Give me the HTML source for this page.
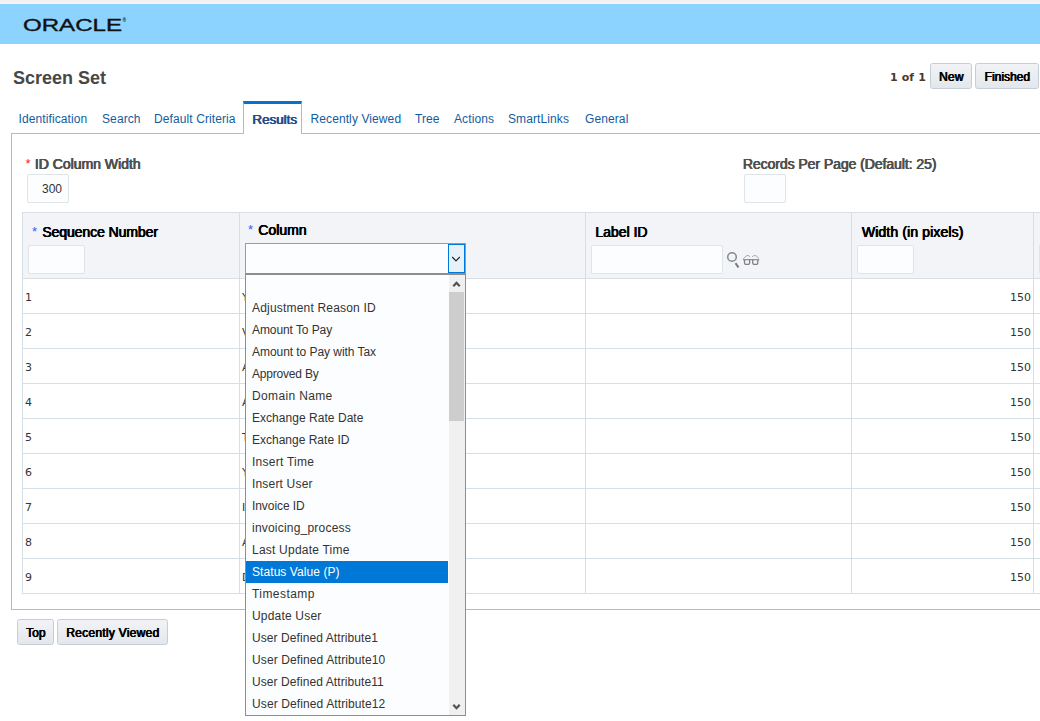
<!DOCTYPE html>
<html lang="en">
<head>
<meta charset="utf-8">
<title>Screen Set</title>
<style>
html,body{margin:0;padding:0;}
body{width:1040px;height:721px;overflow:hidden;background:#fff;position:relative;
  font-family:"Liberation Sans",sans-serif;font-size:12px;color:#333;}
.abs{position:absolute;white-space:nowrap;}
#topstrip{left:0;top:0;width:1040px;height:4px;background:linear-gradient(#f1f1f1 0,#f1f1f1 50%,#f8f8f8 50%,#f6f3f1 100%);}
#hdr{left:0;top:4px;width:1040px;height:40px;background:#8cd3ff;}
#logo{left:20px;top:14px;width:112px;height:22px;}
#title{left:13px;top:66px;font-size:18px;font-weight:bold;line-height:24px;color:#474747;}
#count{left:890px;top:70px;font-family:"DejaVu Sans",sans-serif;font-size:11px;font-weight:bold;line-height:16px;color:#4a3a2e;letter-spacing:0.1px;}
.btn{position:absolute;box-sizing:border-box;height:26px;border:1px solid #c4ced7;border-radius:2.5px;
  background:linear-gradient(#f1f3f6,#e3e7ec);font-weight:normal;font-size:12px;line-height:26px;color:#000;text-shadow:0.4px 0 0 #000,0.75px 0 0 #000;
  text-align:center;white-space:nowrap;}
.tab{position:absolute;top:111px;line-height:16px;font-size:12px;color:#145c9e;white-space:nowrap;letter-spacing:0.1px;}
#panel{left:11px;top:133px;width:1040px;height:475px;border:1px solid #a5bdd9;box-sizing:content-box;}
#acttab{left:243px;top:101px;width:57px;height:30px;border:1px solid #a5bdd9;border-top:3px solid #0572ce;border-bottom:none;background:#fff;}
#acttab span{position:absolute;left:8px;top:7.6px;font-size:13.4px;font-weight:normal;line-height:16px;color:#1d4f91;text-shadow:0.45px 0 0 #1d4f91,0.85px 0 0 #1d4f91;}
.lbl{font-size:14px;font-weight:normal;line-height:16px;color:#4f4f4f;text-shadow:0.4px 0 0 #4f4f4f,0.8px 0 0 #4f4f4f;}
.req{font-family:"Liberation Sans",sans-serif;color:#f21d1d;font-weight:normal;font-size:13px;letter-spacing:0;position:relative;top:-1px;margin-right:0px;text-shadow:none;}
.inp{position:absolute;box-sizing:border-box;height:29px;border:1px solid #dfe4e7;border-radius:2px;background:#fcfdfe;}
#tbl{left:22px;top:212px;width:1030px;height:381px;border-top:1px solid #d6dfe6;border-left:1px solid #d6dfe6;}
#thead{left:23px;top:213px;width:1017px;height:65px;background:#f2f4f8;}
.hline{position:absolute;left:22px;width:1018px;height:1px;background:#d6dfe6;}
.vline{position:absolute;top:212px;width:1px;height:382px;background:#d6dfe6;}
.th{font-weight:normal;font-size:14px;line-height:16px;color:#000;text-shadow:0.4px 0 0 #000,0.8px 0 0 #000;}
.star{font-family:"Liberation Sans",sans-serif;color:#2962ff;font-weight:normal;font-size:13px;letter-spacing:0;position:relative;top:-1px;margin-right:1px;text-shadow:none;}
.num{font-family:"DejaVu Sans",sans-serif;font-size:11px;line-height:14px;color:#333;}
#dd{left:245px;top:274px;width:221px;height:442px;box-sizing:border-box;border:1px solid #8e8e8e;background:#fcfdfe;}
.opt{position:absolute;left:0;width:202px;height:22px;line-height:22px;font-size:12px;color:#333;padding-left:6px;box-sizing:border-box;white-space:nowrap;}
.opt.sel{background:#0078d7;color:#fff;}
#sbar{position:absolute;left:203px;top:0;width:16px;height:440px;background:#f0f0f0;}
#thumb{position:absolute;left:0;top:17px;width:15px;height:129px;background:#cdcdcd;}
#sel{left:245px;top:243px;width:221px;height:31px;box-sizing:border-box;border:1px solid #9b9b9b;border-bottom-color:#8e8e8e;background:#fcfdfe;}
#selbtn{position:absolute;left:202px;top:0;width:17px;height:29px;box-sizing:border-box;border:1px solid #0078d7;background:#e5f1fb;}
</style>
</head>
<body>
<div class="abs" id="topstrip"></div>
<div class="abs" id="hdr"></div>
<svg class="abs" id="logo" viewBox="0 0 112 22">
  <text x="3" y="16.7" font-family="Liberation Sans, sans-serif" font-size="16" fill="#111" stroke="#111" stroke-width="0.35" textLength="99" lengthAdjust="spacingAndGlyphs">ORACLE</text>
  <text x="102.6" y="8.3" font-family="Liberation Sans, sans-serif" font-size="5" font-weight="bold" fill="#1a1a1a">®</text>
</svg>

<div class="abs" id="title">Screen Set</div>
<div class="abs" id="count">1 of 1</div>
<div class="btn" style="left:930px;top:63px;width:42px;letter-spacing:0.2px;">New</div>
<div class="btn" style="left:975px;top:63px;width:64px;">Finished</div>

<div class="tab" style="left:18.5px;">Identification</div>
<div class="tab" style="left:102px;">Search</div>
<div class="tab" style="left:154px;">Default Criteria</div>
<div class="tab" style="left:310.5px;">Recently Viewed</div>
<div class="tab" style="left:415px;">Tree</div>
<div class="tab" style="left:454px;">Actions</div>
<div class="tab" style="left:508px;">SmartLinks</div>
<div class="tab" style="left:585px;">General</div>

<div class="abs" id="panel"></div>
<div class="abs" id="acttab"><span>Results</span></div>

<div class="abs lbl" style="left:25.5px;top:156px;"><span class="req">*</span> ID Column Width</div>
<div class="inp" style="left:27px;top:174px;width:42px;text-align:right;padding-right:6px;line-height:28px;font-size:12px;color:#333;">300</div>
<div class="abs lbl" style="left:742.5px;top:156px;letter-spacing:-0.06px;">Records Per Page (Default: 25)</div>
<div class="inp" style="left:744px;top:174px;width:42px;"></div>

<div class="abs" id="tbl"></div>
<div class="abs" id="thead"></div>
<div class="hline" style="top:278px;"></div>
<div class="hline" style="top:313px;"></div>
<div class="hline" style="top:348px;"></div>
<div class="hline" style="top:383px;"></div>
<div class="hline" style="top:418px;"></div>
<div class="hline" style="top:453px;"></div>
<div class="hline" style="top:488px;"></div>
<div class="hline" style="top:523px;"></div>
<div class="hline" style="top:558px;"></div>
<div class="hline" style="top:593px;"></div>
<div class="vline" style="left:239px;"></div>
<div class="vline" style="left:585px;"></div>
<div class="vline" style="left:851px;"></div>
<div class="vline" style="left:1033px;"></div>

<div class="abs th" style="left:32px;top:223.5px;letter-spacing:-0.07px;"><span class="star">*</span> Sequence Number</div>
<div class="inp" style="left:28px;top:245px;width:57px;"></div>
<div class="abs th" style="left:248px;top:221.5px;"><span class="star">*</span> Column</div>
<div class="abs th" style="left:595px;top:223.5px;">Label ID</div>
<div class="inp" style="left:591px;top:245px;width:132px;"></div>
<div class="abs th" style="left:861.5px;top:223.5px;letter-spacing:0.12px;">Width (in pixels)</div>
<div class="inp" style="left:857px;top:245px;width:57px;"></div>
<div class="inp" style="left:1039px;top:244px;width:57px;height:30px;"></div>

<svg class="abs" style="left:725px;top:250px;width:36px;height:20px;" viewBox="0 0 36 20">
  <circle cx="7" cy="7" r="4.3" fill="none" stroke="#84888c" stroke-width="1.5"/>
  <path d="M10.5 13.1 L13.5 17.5" stroke="#777b7f" stroke-width="2" fill="none"/>
  <g fill="none" stroke="#7d8185" stroke-width="1.3">
    <path d="M18 9.7 H34.2" stroke-width="1.1"/>
    <path d="M19.5 9.7 v3.1 a1.6 1.6 0 0 0 1.6 1.6 h1.9 a1.6 1.6 0 0 0 1.6 -1.6 v-3.1"/>
    <path d="M27.7 9.7 v3.1 a1.6 1.6 0 0 0 1.6 1.6 h1.9 a1.6 1.6 0 0 0 1.6 -1.6 v-3.1"/>
    <path d="M18.3 8.7 Q21.5 5.1 23 5.4 Q24.2 5.7 25 6.9" stroke="#9a9ea2" stroke-width="0.9"/>
    <path d="M27.2 6.9 Q28 5.7 29.3 5.4 Q31 5.1 34 8.5" stroke="#9a9ea2" stroke-width="0.9"/>
  </g>
</svg>

<!-- rows -->
<div class="abs num" style="left:25px;top:291px;">1</div>
<div class="abs num" style="left:25px;top:326px;">2</div>
<div class="abs num" style="left:25px;top:361px;">3</div>
<div class="abs num" style="left:25px;top:396px;">4</div>
<div class="abs num" style="left:25px;top:431px;">5</div>
<div class="abs num" style="left:25px;top:466px;">6</div>
<div class="abs num" style="left:25px;top:501px;">7</div>
<div class="abs num" style="left:25px;top:536px;">8</div>
<div class="abs num" style="left:25px;top:571px;">9</div>

<div class="abs num" style="left:242px;top:291px;">Year</div>
<div class="abs num" style="left:242px;top:326px;">Vendor</div>
<div class="abs num" style="left:242px;top:361px;">Amount To Pay</div>
<div class="abs num" style="left:242px;top:396px;">Approved By</div>
<div class="abs num" style="left:242px;top:431px;">Timestamp</div>
<div class="abs num" style="left:242px;top:466px;">Year To Date</div>
<div class="abs num" style="left:242px;top:501px;">Invoice ID</div>
<div class="abs num" style="left:242px;top:536px;">Adjustment</div>
<div class="abs num" style="left:242px;top:571px;">Domain Name</div>

<div class="abs num" style="left:1010px;top:291px;">150</div>
<div class="abs num" style="left:1010px;top:326px;">150</div>
<div class="abs num" style="left:1010px;top:361px;">150</div>
<div class="abs num" style="left:1010px;top:396px;">150</div>
<div class="abs num" style="left:1010px;top:431px;">150</div>
<div class="abs num" style="left:1010px;top:466px;">150</div>
<div class="abs num" style="left:1010px;top:501px;">150</div>
<div class="abs num" style="left:1010px;top:536px;">150</div>
<div class="abs num" style="left:1010px;top:571px;">150</div>

<div class="btn" style="left:17px;top:619px;width:37px;">Top</div>
<div class="btn" style="left:57px;top:619px;width:111px;letter-spacing:0.27px;">Recently Viewed</div>

<!-- select -->
<div class="abs" id="sel">
  <div id="selbtn">
    <svg style="position:absolute;left:2px;top:11px;" width="11" height="8" viewBox="0 0 11 8"><path d="M1.2 1 L5 4.9 L8.8 1" fill="none" stroke="#2b2b2b" stroke-width="1.25"/></svg>
  </div>
</div>
<div class="abs" id="dd">
  <div class="opt" style="top:0px;">&nbsp;</div>
  <div class="opt" style="top:22px;letter-spacing:0.19px;">Adjustment Reason ID</div>
  <div class="opt" style="top:44px;letter-spacing:-0.08px;">Amount To Pay</div>
  <div class="opt" style="top:66px;letter-spacing:-0.05px;">Amount to Pay with Tax</div>
  <div class="opt" style="top:88px;letter-spacing:-0.20px;">Approved By</div>
  <div class="opt" style="top:110px;letter-spacing:0.36px;">Domain Name</div>
  <div class="opt" style="top:132px;letter-spacing:0.04px;">Exchange Rate Date</div>
  <div class="opt" style="top:154px;">Exchange Rate ID</div>
  <div class="opt" style="top:176px;letter-spacing:0.25px;">Insert Time</div>
  <div class="opt" style="top:198px;letter-spacing:0.18px;">Insert User</div>
  <div class="opt" style="top:220px;letter-spacing:-0.07px;">Invoice ID</div>
  <div class="opt" style="top:242px;letter-spacing:0.21px;">invoicing_process</div>
  <div class="opt" style="top:264px;letter-spacing:0.22px;">Last Update Time</div>
  <div class="opt sel" style="top:286px;letter-spacing:0.07px;">Status Value (P)</div>
  <div class="opt" style="top:308px;letter-spacing:0.44px;">Timestamp</div>
  <div class="opt" style="top:330px;letter-spacing:0.19px;">Update User</div>
  <div class="opt" style="top:352px;letter-spacing:0.08px;">User Defined Attribute1</div>
  <div class="opt" style="top:374px;letter-spacing:0.11px;">User Defined Attribute10</div>
  <div class="opt" style="top:396px;letter-spacing:0.08px;">User Defined Attribute11</div>
  <div class="opt" style="top:418px;letter-spacing:0.11px;">User Defined Attribute12</div>
  <div id="sbar">
    <svg style="position:absolute;left:3px;top:5px;" width="9" height="8" viewBox="0 0 9 8"><path d="M1.3 6.2 L4.5 2.8 L7.7 6.2" fill="none" stroke="#505050" stroke-width="2.2"/></svg>
    <div id="thumb"></div>
    <svg style="position:absolute;left:3px;top:428px;" width="9" height="8" viewBox="0 0 9 8"><path d="M1.3 1.8 L4.5 5.2 L7.7 1.8" fill="none" stroke="#505050" stroke-width="2.2"/></svg>
  </div>
</div>
</body>
</html>
